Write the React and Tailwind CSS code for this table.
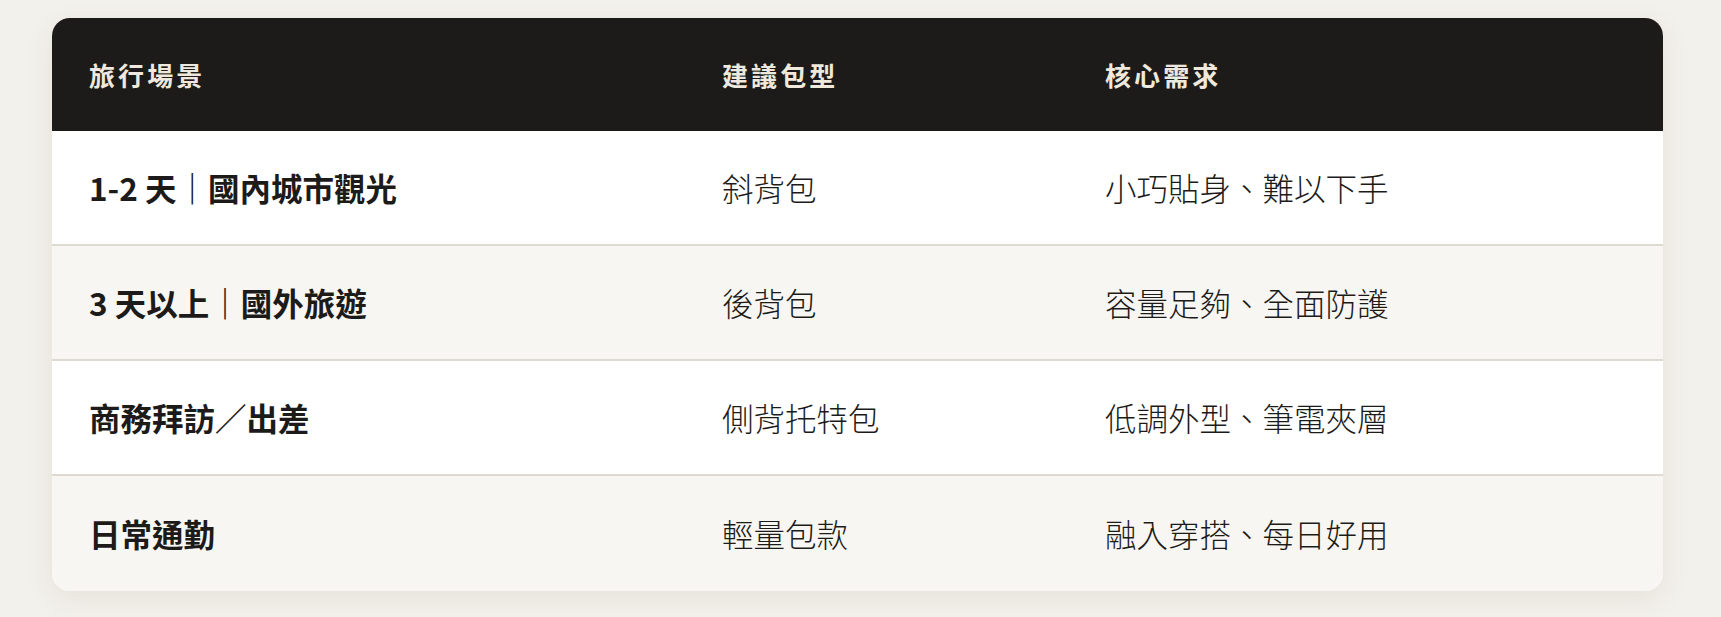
const rows = [
  { scene: "1-2 天｜國內城市觀光", bag: "斜背包", need: "小巧貼身、難以下手" },
  { scene: "3 天以上｜國外旅遊", bag: "後背包", need: "容量足夠、全面防護" },
  { scene: "商務拜訪／出差", bag: "側背托特包", need: "低調外型、筆電夾層" },
  { scene: "日常通勤", bag: "輕量包款", need: "融入穿搭、每日好用" },
];

const font = { fontFamily: '"Noto Sans CJK TC", "Noto Sans", sans-serif' };

export default function App() {
  return (
    <div className="min-h-[617px] w-full bg-[#f3f1ec] pt-[18px] pl-[52px]" style={font}>
      <div className="w-[1611px] overflow-hidden rounded-[18px] bg-white shadow-[0_8px_30px_rgba(60,50,30,0.08)]">
        {/* header */}
        <div className="grid h-[113px] grid-cols-[670px_383px_558px] items-center bg-[#1c1b19] text-[26px] font-bold tracking-[0.12em] text-[#efe9dd]">
          <div className="pl-[37px]">旅行場景</div>
          <div>建議包型</div>
          <div>核心需求</div>
        </div>

        {rows.map((r, i) => (
          <div
            key={r.scene}
            className={
              "grid h-[115px] grid-cols-[670px_383px_558px] items-center text-[31.5px] text-[#1c1b19] " +
              (i % 2 === 0 ? "bg-white" : "bg-[#f8f6f2]") +
              (i < rows.length - 1 ? " border-b-2 border-[#dedad2]" : "")
            }
          >
            <div className="pl-[37px] font-bold">{r.scene}</div>
            <div className="font-light">{r.bag}</div>
            <div className="font-light">{r.need}</div>
          </div>
        ))}
      </div>
    </div>
  );
}
